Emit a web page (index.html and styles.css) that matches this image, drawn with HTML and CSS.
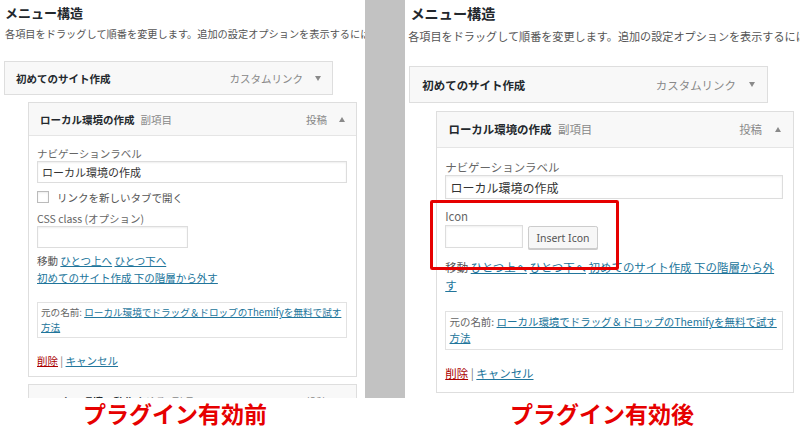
FILE: index.html
```html
<!DOCTYPE html>
<html lang="ja">
<head>
<meta charset="utf-8">
<title>プラグイン有効前・有効後</title>
<link rel="stylesheet" href="styles.css">
</head>
<body>
<div class="compare">
  <section class="shot shot-before">
    <div class="shot-inner">
      <h2 class="menu-title">メニュー構造</h2>
      <p class="menu-desc">各項目をドラッグして順番を変更します。追加の設定オプションを表示するには、項目の右にある矢印をクリックしてください。</p>
      <ul class="menu-list">
        <li class="item item-top">
          <div class="item-head">
            <span class="item-title">初めてのサイト作成</span>
            <span class="item-type">カスタムリンク</span>
            <span class="arrow arrow-down"></span>
          </div>
        </li>
        <li class="item item-sub">
          <div class="item-head">
            <span class="item-title">ローカル環境の作成</span>
            <span class="item-sub-label">副項目</span>
            <span class="item-type">投稿</span>
            <span class="arrow arrow-up"></span>
          </div>
          <div class="item-body">
            <label class="field-label">ナビゲーションラベル</label>
            <input class="text-input input-wide" type="text" value="ローカル環境の作成">
            <div class="check-row">
              <input class="checkbox" type="checkbox">
              <span>リンクを新しいタブで開く</span>
            </div>
            <div class="css-field">
              <label class="field-label">CSS class (オプション)</label>
              <input class="text-input input-short" type="text" value="">
            </div>
            <div class="move">移動 <a href="#">ひとつ上へ</a> <a href="#">ひとつ下へ</a> <a class="nowrap" href="#">初めてのサイト作成 下の階層から外す</a></div>
            <div class="orig">元の名前: <a href="#">ローカル環境でドラッグ＆ドロップのThemifyを無料で試す方法</a></div>
            <div class="actions"><a class="delete" href="#">削除</a> <span class="sep">|</span> <a class="cancel" href="#">キャンセル</a></div>
          </div>
        </li>
        <li class="item item-sub">
          <div class="item-head">
            <span class="item-title">ローカル環境で動作させる</span>
            <span class="item-sub-label">副項目</span>
            <span class="item-type">投稿</span>
            <span class="arrow arrow-down"></span>
          </div>
        </li>
      </ul>
    </div>
  </section>

  <div class="divider"></div>

  <section class="shot shot-after">
    <div class="shot-inner">
      <h2 class="menu-title">メニュー構造</h2>
      <p class="menu-desc">各項目をドラッグして順番を変更します。追加の設定オプションを表示するには、項目の右にある矢印をクリックしてください。</p>
      <ul class="menu-list">
        <li class="item item-top">
          <div class="item-head">
            <span class="item-title">初めてのサイト作成</span>
            <span class="item-type">カスタムリンク</span>
            <span class="arrow arrow-down"></span>
          </div>
        </li>
        <li class="item item-sub">
          <div class="item-head">
            <span class="item-title">ローカル環境の作成</span>
            <span class="item-sub-label">副項目</span>
            <span class="item-type">投稿</span>
            <span class="arrow arrow-up"></span>
          </div>
          <div class="item-body">
            <label class="field-label">ナビゲーションラベル</label>
            <input class="text-input input-wide" type="text" value="ローカル環境の作成">
            <div class="icon-field">
              <label class="field-label">Icon</label>
              <div class="icon-row">
                <input class="text-input input-icon" type="text" value="">
                <button class="btn" type="button">Insert Icon</button>
              </div>
            </div>
            <div class="move">移動 <a href="#">ひとつ上へ</a> <a href="#">ひとつ下へ</a> <a href="#">初めてのサイト作成 下の階層から外す</a></div>
            <div class="orig">元の名前: <a href="#">ローカル環境でドラッグ＆ドロップのThemifyを無料で試す方法</a></div>
            <div class="actions"><a class="delete" href="#">削除</a> <span class="sep">|</span> <a class="cancel" href="#">キャンセル</a></div>
          </div>
        </li>
      </ul>
    </div>
  </section>

  <p class="caption caption-before">プラグイン有効前</p>
  <p class="caption caption-after">プラグイン有効後</p>
</div>
</body>
</html>
```

FILE: styles.css
```css
* { box-sizing: border-box; }

html, body {
  margin: 0;
  padding: 0;
  background: #fff;
}

body {
  width: 800px;
  height: 428px;
  overflow: hidden;
  font-family: "Noto Sans CJK JP", "Noto Sans", sans-serif;
  color: #555;
}

.compare {
  display: grid;
  grid-template-columns: 365px 40px 395px;
  grid-template-rows: 398px 30px;
}

.shot {
  overflow: hidden;
  background: #fff;
}

.divider {
  background: #c2c2c2;
}

.shot-inner {
  padding: 5px 0 0 5px;
}

.shot-after .shot-inner {
  zoom: 1.09;
}

.menu-title {
  margin: 0;
  font-size: 13px;
  line-height: 16px;
  font-weight: 700;
  color: #23282d;
}

.menu-desc {
  margin: 6px 0 0;
  font-size: 10.2px;
  line-height: 14px;
  white-space: nowrap;
  color: #555;
}

.shot-after .menu-desc {
  margin-left: -2px;
}

.menu-list {
  list-style: none;
  margin: 20px 0 0 -1px;
  padding: 0;
}

.item {
  width: 329px;
  border: 1px solid #dedede;
  background: #fff;
}

.item-sub {
  margin: 7px 0 0 24px;
}

.item-head {
  height: 32px;
  display: flex;
  align-items: center;
  padding: 0 11px;
  background: #f8f8f8;
  font-size: 10.5px;
  white-space: nowrap;
}

.item-title {
  font-weight: 700;
  color: #23282d;
}

.item-sub-label {
  margin-left: 6px;
  color: #888;
}

.item-type {
  margin-left: auto;
  color: #888;
}

.arrow {
  width: 0;
  height: 0;
  margin-left: 12px;
  border-left: 3.5px solid transparent;
  border-right: 3.5px solid transparent;
}

.arrow-down { border-top: 5px solid #8a8a8a; }
.arrow-up { border-bottom: 5px solid #8a8a8a; }

.item-body {
  border-top: 1px solid #e5e5e5;
  padding: 11px 9px 8px 8px;
  font-size: 10.5px;
  color: #555;
}

.shot-after .item-body {
  padding-bottom: 10px;
}

.field-label {
  display: block;
  line-height: 14px;
  color: #666;
}

.text-input {
  display: block;
  height: 22px;
  margin: 0;
  padding: 0 4px;
  border: 1px solid #ddd;
  border-radius: 0;
  box-shadow: inset 0 1px 2px rgba(0, 0, 0, 0.07);
  background: #fff;
  font-family: inherit;
  font-size: 11px;
  color: #333;
  outline: none;
}

.input-wide { width: 310px; }
.input-short { width: 151px; }

.check-row {
  display: flex;
  align-items: center;
  height: 14px;
  margin-top: 7px;
}

.checkbox {
  appearance: none;
  width: 12px;
  height: 12px;
  margin: 0 8px 0 0;
  border: 1px solid #bbb;
  background: #fff;
  box-shadow: inset 0 1px 2px rgba(0, 0, 0, 0.08);
}

.css-field {
  margin-top: 8px;
}

.icon-field {
  position: relative;
  margin-top: 9px;
}

.icon-field::before {
  content: "";
  position: absolute;
  left: -14px;
  top: -8.5px;
  width: 168px;
  height: 59.5px;
  border: 3.5px solid #e60000;
  border-radius: 2px;
  pointer-events: none;
}

.icon-row {
  display: flex;
  align-items: flex-start;
  gap: 5px;
  margin-top: 1px;
}

.input-icon {
  width: 71px;
  height: 21px;
}

.btn {
  height: 21px;
  width: 64px;
  margin-top: 1px;
  padding: 0;
  border: 1px solid #ccc;
  border-radius: 2px;
  background: #f7f7f7;
  box-shadow: 0 1px 0 #ccc;
  font-family: "Noto Sans", sans-serif;
  font-size: 9.6px;
  color: #555;
}

.move {
  margin-top: 5px;
  line-height: 16.5px;
  color: #555;
}

.shot-after .move {
  margin-top: 9px;
}

a {
  color: #21759b;
  text-decoration: underline;
}

.nowrap {
  white-space: nowrap;
}

.orig {
  margin-top: 16px;
  padding: 2px 3px 3px;
  border: 1px solid #e2e2e2;
  font-size: 9.6px;
  line-height: 14.5px;
  color: #666;
}

.shot-after .orig {
  margin-top: 15px;
}

.actions {
  margin-top: 15px;
  line-height: 15px;
}

.shot-after .actions {
  margin-top: 13.5px;
}

.delete { color: #a00; }
.sep { color: #777; }

.caption {
  margin: 0;
  grid-row: 2;
  font-size: 23px;
  line-height: 30px;
  font-weight: 700;
  color: #e60000;
  white-space: nowrap;
}

.caption-before {
  grid-column: 1;
  padding-left: 83px;
}

.caption-after {
  grid-column: 3;
  padding-left: 105px;
}
```
